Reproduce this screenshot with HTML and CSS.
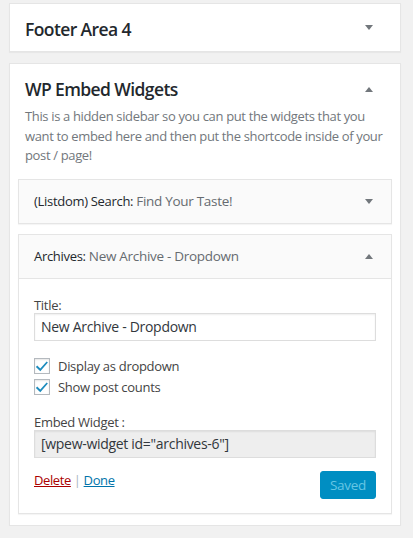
FILE: index.html
```html
<!DOCTYPE html>
<html>
<head>
<meta charset="utf-8">
<link rel="stylesheet" href="styles.css">
</head>
<body>
<div class="page">
  <div class="sidebar closed">
    <div class="sidebar-name">
      <h2>Footer Area 4</h2>
      <span class="arrow down"></span>
    </div>
  </div>

  <div class="sidebar open">
    <div class="sidebar-name">
      <h2>WP Embed Widgets</h2>
      <span class="arrow up"></span>
    </div>
    <p class="description">This is a hidden sidebar so you can put the widgets that you want to embed here and then put the shortcode inside of your post / page!</p>

    <div class="widget">
      <div class="widget-top">
        <h3>(Listdom) Search: <span class="in-title">Find Your Taste!</span></h3>
        <span class="arrow down"></span>
      </div>
    </div>

    <div class="widget">
      <div class="widget-top">
        <h3>Archives: <span class="in-title">New Archive - Dropdown</span></h3>
        <span class="arrow up"></span>
      </div>
      <div class="widget-inside">
        <label class="field-label">Title:</label>
        <input class="text-input" type="text" value="New Archive - Dropdown">
        <div class="checks">
          <div class="check-row">
            <span class="checkbox"><svg viewBox="0 0 16 16" width="16" height="16"><path d="M3.2 7.6 L6.3 10.6 L12.6 3.4 L13.9 4.6 L6.3 13.2 L1.9 8.9 Z" fill="#1e8cbe"/></svg></span>
            <span class="check-label">Display as dropdown</span>
          </div>
          <div class="check-row">
            <span class="checkbox"><svg viewBox="0 0 16 16" width="16" height="16"><path d="M3.2 7.6 L6.3 10.6 L12.6 3.4 L13.9 4.6 L6.3 13.2 L1.9 8.9 Z" fill="#1e8cbe"/></svg></span>
            <span class="check-label">Show post counts</span>
          </div>
        </div>
        <label class="field-label embed-label">Embed Widget :</label>
        <input class="text-input readonly" type="text" value="[wpew-widget id=&quot;archives-6&quot;]" readonly>
        <div class="actions">
          <div class="links"><a class="delete" href="#">Delete</a><span class="sep">|</span><a class="done" href="#">Done</a></div>
          <button class="saved" type="button">Saved</button>
        </div>
      </div>
    </div>
  </div>
</div>
</body>
</html>
```

FILE: styles.css
```css
html, body {
  margin: 0;
  padding: 0;
  background: #f1f1f1;
}
body {
  font-family: "Open Sans", "Noto Sans", sans-serif;
  color: #444;
  font-size: 13px;
  letter-spacing: -0.3px;
}
.page {
  padding: 3px 12px 0 9px;
  display: flex;
  flex-direction: column;
  gap: 11px;
}
.sidebar {
  background: #fff;
  border: 1px solid #e5e5e5;
  box-shadow: 0 1px 1px rgba(0,0,0,0.04);
}
.sidebar-name {
  display: flex;
  align-items: center;
  justify-content: space-between;
  padding: 0 27px 0 15px;
}
.closed .sidebar-name {
  height: 47px;
}
.open .sidebar-name {
  padding-top: 13px;
}
.sidebar-name h2 {
  margin: 0;
  font-size: 17.5px;
  font-weight: 600;
  line-height: 24px;
  color: #23282d;
  letter-spacing: -0.6px;
}
.closed .sidebar-name h2 {
  padding-top: 3px;
}
.arrow {
  width: 0;
  height: 0;
  border-left: 4px solid transparent;
  border-right: 4px solid transparent;
}
.arrow.down {
  border-top: 5px solid #72777c;
}
.arrow.up {
  border-bottom: 5px solid #72777c;
}
.description {
  margin: 6px 15px 13px 15px;
  color: #72777c;
  font-size: 13px;
  line-height: 19.5px;
  letter-spacing: -0.35px;
}
.open {
  padding-bottom: 11px;
}
.widget {
  margin: 0 8px 10px 8px;
  border: 1px solid #e5e5e5;
  background: #fafafa;
  box-shadow: 0 1px 1px rgba(0,0,0,0.04);
}
.widget:last-child {
  margin-bottom: 0;
}
.widget-top {
  height: 43px;
  display: flex;
  align-items: center;
  justify-content: space-between;
  padding: 0 18px 0 15px;
}
.widget-top h3 {
  margin: 0;
  font-size: 13px;
  font-weight: 500;
  color: #23282d;
  line-height: 16px;
  letter-spacing: -0.3px;
}
.in-title {
  color: #666b70;
  font-weight: 400;
  font-size: 13.5px;
}
.widget-inside {
  background: #fff;
  border-top: 1px solid #e5e5e5;
  padding: 18px 15px 14px 15px;
  display: flex;
  flex-direction: column;
}
.field-label {
  display: block;
  line-height: 16px;
  font-size: 13px;
  color: #444;
}
.text-input {
  box-sizing: border-box;
  width: 100%;
  height: 28px;
  margin: 0;
  padding: 2px 6px;
  border: 1px solid #ddd;
  box-shadow: inset 0 1px 2px rgba(0,0,0,0.07);
  background: #fff;
  color: #32373c;
  font-family: "Open Sans", "Noto Sans", sans-serif;
  font-size: 14px;
  letter-spacing: -0.3px;
  outline: none;
}
.text-input.readonly {
  background: #eee;
}
.checks {
  margin-top: 17px;
  display: flex;
  flex-direction: column;
  gap: 5px;
}
.check-row {
  display: flex;
  align-items: center;
  gap: 8px;
  height: 16px;
}
.checkbox {
  box-sizing: border-box;
  width: 16px;
  height: 16px;
  border: 1px solid #b4b9be;
  background: #fff;
  box-shadow: inset 0 1px 2px rgba(0,0,0,0.1);
  display: flex;
  align-items: center;
  justify-content: center;
  overflow: hidden;
}
.checkbox svg {
  flex: none;
  display: block;
}
.check-label {
  font-size: 13px;
  line-height: 16px;
  color: #444;
}
.embed-label {
  margin-top: 19px;
}
.actions {
  margin-top: 13px;
  display: flex;
  justify-content: space-between;
  align-items: flex-start;
}
.links {
  line-height: 18px;
  font-size: 13px;
  letter-spacing: -0.4px;
}
.links a {
  text-decoration: underline;
}
.delete {
  color: #a00;
}
.done {
  color: #0073aa;
}
.sep {
  color: #a7b6c2;
  margin: 0 3px;
}
.saved {
  box-sizing: border-box;
  width: 56px;
  height: 28px;
  margin: 0;
  padding: 0;
  border: 1px solid #008ec2;
  border-radius: 3px;
  background: #008ec2;
  color: #66c6e4;
  font-family: "Open Sans", "Noto Sans", sans-serif;
  font-size: 13.5px;
  letter-spacing: -0.3px;
}
```
